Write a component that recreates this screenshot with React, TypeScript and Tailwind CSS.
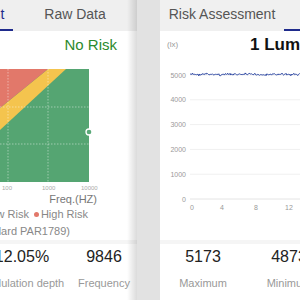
import React from "react";

const font = { fontFamily: '"Liberation Sans", Arial, sans-serif' };

function noisePath() {
  let s = 7;
  const rnd = () => {
    s = (s * 9301 + 49297) % 233280;
    return s / 233280;
  };
  const pts: string[] = [];
  for (let x = 30; x <= 140; x += 0.8) {
    const y = 16.5 + (rnd() - 0.5) * (rnd() > 0.7 ? 3.2 : 1.4);
    pts.push(`${x.toFixed(1)},${y.toFixed(2)}`);
  }
  return "M" + pts.join(" L");
}

export default function App() {
  const ys = [17, 41.8, 66.6, 91.4, 116.2, 141];
  const labels = ["5000", "4000", "3000", "2000", "1000", "0"];
  const xs = [
    { x: 32, t: "0" },
    { x: 62, t: "4" },
    { x: 96, t: "8" },
    { x: 129, t: "12" },
  ];
  return (
    <div className="w-[300px] h-[300px] flex bg-[#e2e2e2] overflow-hidden" style={font}>
      {/* Left phone */}
      <div className="relative w-[137px] h-[300px] shrink-0 overflow-hidden bg-white">
        <div className="flex h-[31px] bg-[#efefef]">
          <div className="w-[124px] ml-[-111px] shrink-0 flex flex-col">
            <div className="flex-1 flex items-center justify-center text-[14px] text-[#1f2b8c] whitespace-nowrap">
              Risk Assessment
            </div>
            <div className="h-[2px] bg-[#1f2b8c]" />
          </div>
          <div className="w-[124px] shrink-0 flex items-center justify-center text-[14px] text-[#555] whitespace-nowrap pb-[2px]">
            Raw Data
          </div>
        </div>
        <div className="h-[29px] flex items-center justify-end pr-[20px] text-[15px] text-[#2c8a2c] whitespace-nowrap">
          No Risk
        </div>
        <div className="pt-[9px]">
          <svg width="93" height="113" viewBox="0 0 93 113" className="block">
            <rect x="0" y="0" width="89" height="113" fill="#55a572" />
            <polygon points="48,0 66,0 0,61 0,39" fill="#f4c44e" />
            <polygon points="0,0 48,0 0,39" fill="#e2786a" />
            <line x1="0" y1="38" x2="89" y2="38" stroke="#ffffff" strokeOpacity="0.55" strokeWidth="0.8" strokeDasharray="1.5 1.5" />
            <line x1="0" y1="75" x2="89" y2="75" stroke="#ffffff" strokeOpacity="0.55" strokeWidth="0.8" strokeDasharray="1.5 1.5" />
            <line x1="8" y1="0" x2="8" y2="113" stroke="#ffffff" strokeOpacity="0.55" strokeWidth="0.8" strokeDasharray="1.5 1.5" />
            <line x1="48" y1="0" x2="48" y2="113" stroke="#ffffff" strokeOpacity="0.55" strokeWidth="0.8" strokeDasharray="1.5 1.5" />
            <circle cx="89" cy="63" r="3" fill="#5aa978" stroke="#ffffff" strokeWidth="1.3" />
          </svg>
        </div>
        <div className="relative h-[10px] text-[6px] text-[#aaa]">
          <span className="absolute top-[2px] left-[2px]">100</span>
          <span className="absolute top-[2px] left-[42px]">1000</span>
          <span className="absolute top-[2px] left-[81px]">10000</span>
        </div>
        <div className="h-[14px] flex items-center justify-end pr-[40px] text-[11px] text-[#777] whitespace-nowrap">
          Freq.(HZ)
        </div>
        <div className="h-[16px] flex items-center justify-end pr-[49px] text-[11px] text-[#888] whitespace-nowrap">
          <span className="shrink-0 w-[5px] h-[5px] rounded-full bg-[#55a572] mr-[2px]" />
          <span className="shrink-0">Low Risk</span>
          <span className="shrink-0 w-[5px] h-[5px] rounded-full bg-[#e2786a] ml-[5px] mr-[2px]" />
          <span className="shrink-0">High Risk</span>
        </div>
        <div className="h-[18px] flex items-center justify-end pr-[67px] text-[11px] text-[#888] whitespace-nowrap">
          <span className="shrink-0">(Standard PAR1789)</span>
        </div>
        <div className="h-[4px] bg-[#f5f5f5]" />
        <div className="flex">
          <div className="w-[100px] ml-[-28px] shrink-0 flex flex-col items-center whitespace-nowrap">
            <div className="h-[26px] flex items-center text-[16px] text-[#222]">12.05%</div>
            <div className="h-[26px] flex items-center text-[11px] text-[#999]">Modulation depth</div>
          </div>
          <div className="w-[64px] shrink-0 flex flex-col items-center whitespace-nowrap">
            <div className="h-[26px] flex items-center text-[16px] text-[#222]">9846</div>
            <div className="h-[26px] flex items-center text-[11px] text-[#999]">Frequency</div>
          </div>
        </div>
        <div className="absolute top-0 right-0 w-[10px] h-full bg-gradient-to-r from-transparent to-[rgba(0,0,0,0.14)]" />
      </div>

      <div className="w-[23px] shrink-0" />

      {/* Right phone */}
      <div className="w-[140px] h-[300px] shrink-0 overflow-hidden bg-white">
        <div className="flex h-[31px] bg-[#f0f0f0]">
          <div className="w-[124px] shrink-0 flex items-center justify-center text-[14px] text-[#555] whitespace-nowrap pb-[2px]">
            Risk Assessment
          </div>
          <div className="w-[124px] shrink-0 flex flex-col">
            <div className="flex-1 flex items-center justify-center text-[14px] text-[#1f2b8c] whitespace-nowrap">
              Raw Data
            </div>
            <div className="h-[2px] bg-[#1f2b8c]" />
          </div>
        </div>
        <div className="h-[27px] flex items-center pl-[7px] whitespace-nowrap">
          <span className="shrink-0 text-[8px] text-[#999] w-[83px]">(lx)</span>
          <span className="shrink-0 text-[17px] font-bold text-[#111]">1 Luminance</span>
        </div>
        <svg width="140" height="182" viewBox="0 0 140 182" className="block">
          {ys.map((y, i) => (
            <g key={i}>
              <line x1="30" y1={y} x2="140" y2={y} stroke={i === 5 ? "#e4e4e4" : "#f0f0f0"} strokeWidth="1" />
              <text x="26" y={y + 2.5} textAnchor="end" fontSize="7" fill="#999" style={font}>
                {labels[i]}
              </text>
            </g>
          ))}
          {xs.map((p) => (
            <text key={p.t} x={p.x} y={151.5} textAnchor="middle" fontSize="7" fill="#999" style={font}>
              {p.t}
            </text>
          ))}
          <path d={noisePath()} fill="none" stroke="#1e3a9c" strokeWidth="0.9" />
        </svg>
        <div className="h-[4px] bg-[#f5f5f5]" />
        <div className="flex">
          <div className="w-[86px] shrink-0 flex flex-col items-center whitespace-nowrap">
            <div className="h-[26px] flex items-center text-[16px] text-[#222]">5173</div>
            <div className="h-[26px] flex items-center text-[11px] text-[#999]">Maximum</div>
          </div>
          <div className="w-[86px] shrink-0 flex flex-col items-center whitespace-nowrap">
            <div className="h-[26px] flex items-center text-[16px] text-[#222]">4873</div>
            <div className="h-[26px] flex items-center text-[11px] text-[#999]">Minimum</div>
          </div>
        </div>
      </div>
    </div>
  );
}
